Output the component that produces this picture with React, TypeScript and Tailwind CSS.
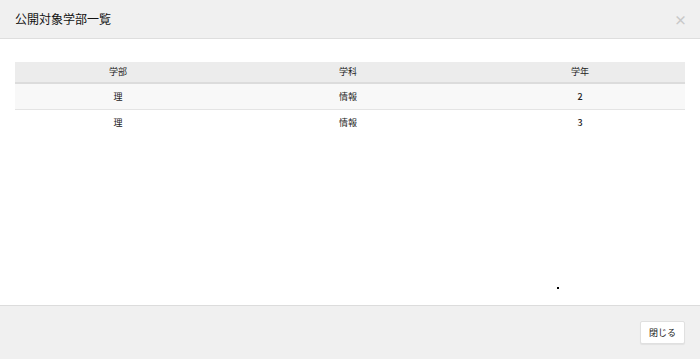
const rows = [
  { faculty: "理", dept: "情報", grade: "2" },
  { faculty: "理", dept: "情報", grade: "3" },
];

export default function App() {
  return (
    <div
      className="w-[700px] h-[359px] bg-white flex flex-col text-[#222]"
      style={{ fontFamily: '"Noto Sans CJK JP", "Liberation Sans", sans-serif' }}
    >
      <div className="h-[39px] bg-[#f0f0f0] border-b border-[#dedede] flex items-center justify-between pl-[15px] pr-[13px]">
        <h1 className="text-[12px] leading-none text-[#111]">公開対象学部一覧</h1>
        <span className="text-[13px] font-bold leading-none text-[#c8c8c8]">×</span>
      </div>

      <div className="flex-1 px-[15px] pt-[23px] relative">
        <table className="w-full border-collapse text-[9px]">
          <thead>
            <tr className="h-[21px] bg-[#ececec] border-b-2 border-[#dcdcdc]">
              <th className="w-[206px] font-normal text-center">学部</th>
              <th className="w-[254px] font-normal text-center">学科</th>
              <th className="font-normal text-center">学年</th>
            </tr>
          </thead>
          <tbody>
            {rows.map((r, i) => (
              <tr
                key={i}
                className={`h-[26px] ${i === 0 ? "bg-[#f8f8f8] border-b border-[#e4e4e4]" : "bg-white"}`}
              >
                <td className="text-center">{r.faculty}</td>
                <td className="text-center">{r.dept}</td>
                <td className="text-center font-medium">{r.grade}</td>
              </tr>
            ))}
          </tbody>
        </table>
        <span className="absolute left-[557px] top-[248px] w-[2px] h-[2px] bg-black" />
      </div>

      <div className="h-[54px] bg-[#f0f0f0] border-t border-[#dcdcdc] flex items-center justify-end pr-[15px]">
        <button className="h-[23px] px-[8px] bg-white border border-[#e0e0e0] rounded-[2px] shadow-[0_1px_1px_rgba(0,0,0,0.06)] text-[9px] text-[#222]">
          閉じる
        </button>
      </div>
    </div>
  );
}
